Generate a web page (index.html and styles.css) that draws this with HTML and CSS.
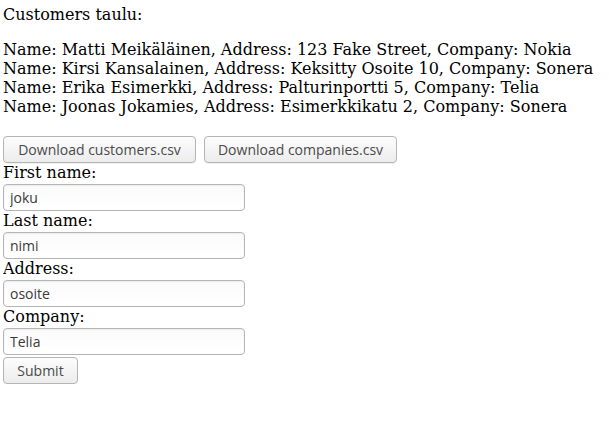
FILE: index.html
```html
<!DOCTYPE html>
<html>
<head>
<meta charset="utf-8">
<link rel="stylesheet" href="styles.css">
</head>
<body>
<p class="title">Customers taulu:</p>
<p class="list">Name: Matti Meikäläinen, Address: 123 Fake Street, Company: Nokia<br>Name: Kirsi Kansalainen, Address: Keksitty Osoite 10, Company: Sonera<br>Name: Erika Esimerkki, Address: Palturinportti 5, Company: Telia<br>Name: Joonas Jokamies, Address: Esimerkkikatu 2, Company: Sonera</p>
<div class="downloads">
  <button class="btn btn-wide">Download customers.csv</button>
  <button class="btn btn-wide">Download companies.csv</button>
</div>
<form class="form">
  <label class="label">First name:</label>
  <input class="field" type="text" value="joku">
  <label class="label">Last name:</label>
  <input class="field" type="text" value="nimi">
  <label class="label">Address:</label>
  <input class="field" type="text" value="osoite">
  <label class="label">Company:</label>
  <input class="field" type="text" value="Telia">
  <button class="btn btn-submit" type="button">Submit</button>
</form>
</body>
</html>
```
FILE: styles.css
```css
html, body { background: #fff; }
body {
  margin: 5px 3px 3px;
  font-family: "DejaVu Serif", serif;
  font-size: 16px;
  line-height: 19px;
  color: #000;
}
.title { margin: 0; }
.list { margin: 16px 0 0; }
.downloads {
  display: flex;
  gap: 8px;
  margin-top: 20px;
}
.btn {
  box-sizing: border-box;
  height: 27px;
  padding: 0;
  font-family: "Open Sans", "DejaVu Sans", sans-serif;
  font-size: 14px;
  color: #4a4a4a;
  background: linear-gradient(#fdfdfd, #ececec);
  border: 1px solid #b4b4b4;
  border-radius: 4px;
  box-shadow: 0 1px 0 rgba(0,0,0,0.05);
}
.btn-wide { width: 193px; }
.form {
  display: flex;
  flex-direction: column;
  align-items: flex-start;
  margin: 0;
}
.label { display: block; height: 19px; }
.field {
  box-sizing: border-box;
  width: 242px;
  height: 27px;
  margin: 2px 0 0;
  padding: 0 6px;
  font-family: "Open Sans", "DejaVu Sans", sans-serif;
  font-size: 14px;
  color: #3a3a3a;
  background: linear-gradient(#fafafa, #fff);
  border: 1px solid #b4b4b4;
  border-radius: 4px;
  box-shadow: inset 0 1px 2px rgba(0,0,0,0.06);
}
.btn-submit {
  width: 75px;
  margin-top: 2px;
}
```
